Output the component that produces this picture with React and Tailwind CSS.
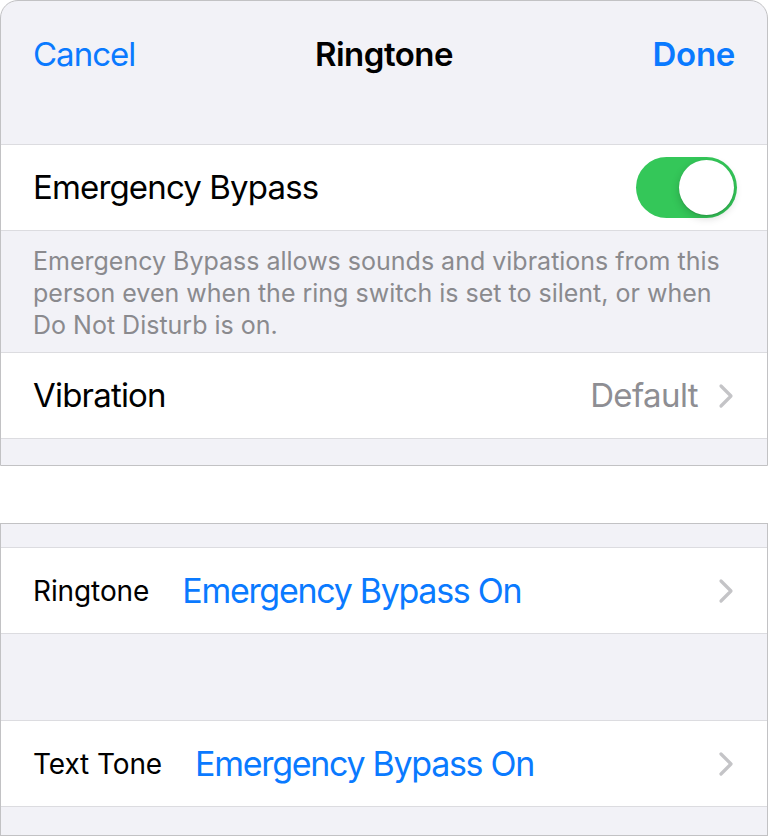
import React from 'react';

const Chevron = () => (
  <svg width="16" height="26" viewBox="0 0 16 26" fill="none" className="shrink-0">
    <path d="M3 3l10 10-10 10" stroke="#c4c4c7" strokeWidth="3.2" strokeLinecap="round" strokeLinejoin="round" />
  </svg>
);

const Toggle = () => (
  <div className="w-[101px] h-[61px] rounded-full bg-[#34c759] flex items-center justify-end p-[3px]">
    <div className="w-[55px] h-[55px] rounded-full bg-white shadow-[0_3px_8px_rgba(0,0,0,0.18),0_1px_1px_rgba(0,0,0,0.12)]" />
  </div>
);

const ToneRow = ({ label, value }) => (
  <div className="h-[87px] bg-white flex items-center pl-[32px] pr-[33px] border-y border-[#dcdce0]">
    <span className="text-[28px] text-black tracking-[-0.1px]">{label}</span>
    <span className="ml-[33px] text-[34px] text-[#0a7aff] tracking-[-1.3px]">{value}</span>
    <div className="ml-auto">
      <Chevron />
    </div>
  </div>
);

export default function App() {
  return (
    <div className="w-[768px] h-[836px] bg-white font-['Inter','Noto_Sans',sans-serif] overflow-hidden">
      {/* top card */}
      <div className="h-[466px] bg-[#f2f2f7] border border-[#c2c2c4] rounded-t-[18px] flex flex-col">
        <div className="h-[143px] flex items-start pt-[29px] px-[32px] relative">
          <span className="text-[33px] text-[#0a7aff] tracking-[-1px]">Cancel</span>
          <span className="absolute left-0 right-0 text-center text-[33px] font-semibold text-black tracking-[-0.5px] pointer-events-none">
            Ringtone
          </span>
          <span className="ml-auto text-[33px] font-semibold text-[#0a7aff] tracking-[-0.3px]">Done</span>
        </div>

        <div className="h-[87px] bg-white border-y border-[#dcdce0] flex items-center pl-[32px] pr-[30px]">
          <span className="text-[33px] text-black tracking-[-0.85px]">Emergency Bypass</span>
          <div className="ml-auto">
            <Toggle />
          </div>
        </div>

        <div className="h-[121px] pt-[14px] px-[32px] text-[25px] leading-[32px] text-[#8a8a8e]">
          Emergency Bypass allows sounds and vibrations from this
          <br />
          person even when the ring switch is set to silent, or when
          <br />
          Do Not Disturb is on.
        </div>

        <div className="h-[87px] bg-white border-y border-[#dcdce0] flex items-center pl-[32px] pr-[33px]">
          <span className="text-[33px] text-black tracking-[-0.8px]">Vibration</span>
          <span className="ml-auto text-[33px] text-[#8e8e93] tracking-[-0.6px] mr-[20px]">Default</span>
          <Chevron />
        </div>
      </div>

      <div className="h-[57px]" />

      {/* bottom card */}
      <div className="h-[313px] bg-[#f2f2f7] border border-[#c2c2c4] flex flex-col">
        <div className="h-[23px]" />
        <ToneRow label="Ringtone" value="Emergency Bypass On" />
        <div className="h-[86px]" />
        <ToneRow label="Text Tone" value="Emergency Bypass On" />
      </div>
    </div>
  );
}
